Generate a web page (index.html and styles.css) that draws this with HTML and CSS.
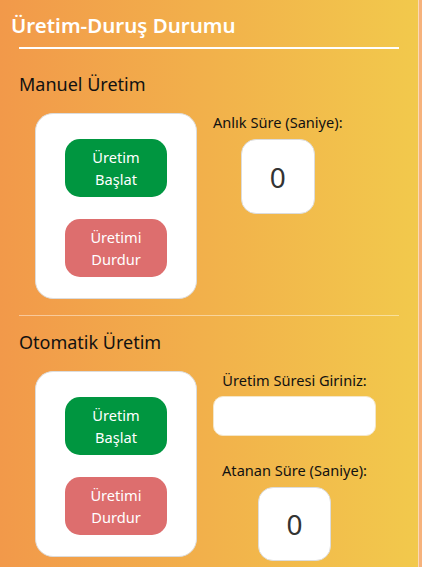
FILE: index.html
```html
<!DOCTYPE html>
<html lang="tr">
<head>
<meta charset="utf-8">
<link rel="stylesheet" href="styles.css">
</head>
<body>
<div class="panel">
  <h1 class="title">Üretim-Duruş Durumu</h1>
  <div class="rule"></div>

  <section class="section first">
    <h2 class="heading">Manuel Üretim</h2>
    <div class="row">
      <div class="card">
        <button class="btn start">Üretim<br>Başlat</button>
        <button class="btn stop">Üretimi<br>Durdur</button>
      </div>
      <div class="side">
        <div class="label">Anlık Süre (Saniye):</div>
        <div class="value">0</div>
      </div>
    </div>
  </section>

  <div class="divider"></div>

  <section class="section second">
    <h2 class="heading">Otomatik Üretim</h2>
    <div class="row">
      <div class="card">
        <button class="btn start">Üretim<br>Başlat</button>
        <button class="btn stop">Üretimi<br>Durdur</button>
      </div>
      <div class="side wide">
        <div class="label">Üretim Süresi Giriniz:</div>
        <input class="input" type="text">
        <div class="label assigned">Atanan Süre (Saniye):</div>
        <div class="value small">0</div>
      </div>
    </div>
  </section>
</div>
</body>
</html>
```

FILE: styles.css
```css
html, body {
  margin: 0;
  padding: 0;
}
body {
  background: #f6b27c;
  font-family: "Noto Sans", "Open Sans", "DejaVu Sans", sans-serif;
  height: 567px;
  overflow: hidden;
}
.panel {
  width: 419px;
  height: 567px;
  background: linear-gradient(to right, #f2994a, #f2c94c);
  border-right: 1px solid #fbd9b5;
  box-sizing: border-box;
  padding: 0 19px;
  overflow: hidden;
}
.title {
  margin: 0 0 0 -8px;
  padding-top: 11px;
  font-size: 20.5px;
  line-height: 28px;
  font-weight: 600;
  color: #fff;
}
.rule {
  margin-top: 8px;
  height: 2px;
  background: #fff;
}
.heading {
  margin: 0;
  font-size: 18px;
  line-height: 24px;
  font-weight: 400;
  color: #111;
}
.first .heading { margin-top: 23px; }
.second .heading { margin-top: 14px; }
.row {
  display: flex;
  align-items: flex-start;
  margin-top: 17px;
}
.card {
  margin-left: 16px;
  width: 162px;
  height: 186px;
  box-sizing: border-box;
  background: #fff;
  border: 1px solid #dcdcdc;
  border-radius: 18px;
  padding: 25px 29px 0;
  display: flex;
  flex-direction: column;
  gap: 22px;
}
.btn {
  width: 102px;
  height: 58px;
  border: none;
  border-radius: 15px;
  color: #fff;
  font-family: inherit;
  font-size: 14.6px;
  line-height: 22px;
  padding: 0;
}
.start { background: #009640; }
.stop { background: #dd6e6e; }
.side {
  margin-left: 16px;
  display: flex;
  flex-direction: column;
  align-items: center;
}
.side.wide { width: 163px; }
.label {
  font-size: 14.6px;
  line-height: 18px;
  color: #111;
}
.value {
  margin-top: 8px;
  width: 74px;
  height: 75px;
  box-sizing: border-box;
  background: #fff;
  border: 1px solid #dcdcdc;
  border-radius: 15px;
  display: flex;
  align-items: center;
  justify-content: center;
  font-size: 28px;
  color: #333;
}
.value.small { width: 73px; height: 74px; }
.input {
  margin-top: 7px;
  width: 163px;
  height: 40px;
  box-sizing: border-box;
  border: 1px solid #f4e6c8;
  border-radius: 10px;
  background: #fff;
  outline: none;
}
.assigned { margin-top: 25px; }
.divider {
  margin-top: 16px;
  height: 1px;
  background: rgba(255, 255, 255, 0.45);
}
```
